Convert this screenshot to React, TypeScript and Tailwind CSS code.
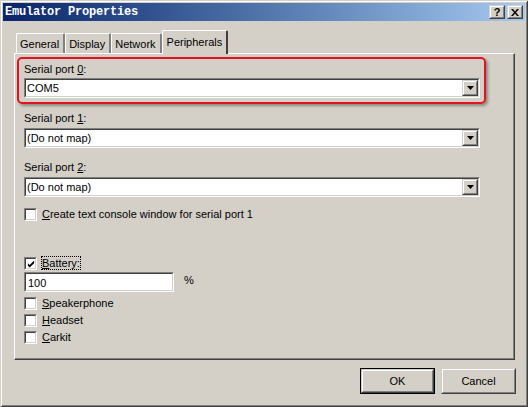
import type { ReactNode } from 'react';

const ui = "font-['Liberation_Sans',Arial,sans-serif] text-[11px] leading-[13px] text-black";

function Sunken({ className, children }: { className: string; children?: ReactNode }) {
  return (
    <div className={`border border-t-[#808080] border-l-[#808080] border-b-white border-r-white ${className}`}>
      <div className="flex h-full w-full border border-t-[#404040] border-l-[#404040] border-b-[#D4D0C8] border-r-[#D4D0C8] bg-white">
        {children}
      </div>
    </div>
  );
}

function Raised({ className, children }: { className: string; children?: ReactNode }) {
  return (
    <div className={`border border-t-[#D4D0C8] border-l-[#D4D0C8] border-b-[#404040] border-r-[#404040] ${className}`}>
      <div className="flex h-full w-full items-center justify-center border border-t-white border-l-white border-b-[#808080] border-r-[#808080] bg-[#D4D0C8]">
        {children}
      </div>
    </div>
  );
}

function Combo({ value }: { value: string }) {
  return (
    <Sunken className="h-[20px] w-[456px]">
      <span className="flex-1 pl-[1px] pt-[2px]">{value}</span>
      <Raised className="h-[16px] w-[16px]">
        <svg width="7" height="4" viewBox="0 0 7 4">
          <path d="M0 0h7L3.5 4z" fill="#000" />
        </svg>
      </Raised>
    </Sunken>
  );
}

function Check({ checked, children }: { checked?: boolean; children: ReactNode }) {
  return (
    <div className="flex items-center">
      <Sunken className="h-[13px] w-[13px]">
        {checked && (
          <svg width="9" height="9" viewBox="0 0 9 9" className="ml-[1px] mt-[1px]">
            <path d="M1 3v3l2 2 5-5V0L3 5z" fill="#000" />
          </svg>
        )}
      </Sunken>
      <span className="ml-[5px]">{children}</span>
    </div>
  );
}

function Tab({ label, active }: { label: string; active?: boolean }) {
  return (
    <div
      className={
        active
          ? 'relative z-10 mb-[-1px] flex h-[24px] items-center rounded-t-[2px] border-l border-t border-r-2 border-l-white border-t-white border-r-[#404040] bg-[#D4D0C8] px-[4px]'
          : 'flex h-[20px] items-center rounded-t-[2px] border-l border-t border-r-2 border-l-white border-t-white border-r-[#808080] pl-[3px] pr-[4px] pt-[1px]'
      }
    >
      {label}
    </div>
  );
}

export default function App() {
  return (
    <div className={`flex h-[407px] w-[528px] flex-col bg-[#D4D0C8] p-[3px] shadow-[inset_1px_1px_#D4D0C8,inset_-1px_-1px_#404040,inset_2px_2px_white,inset_-2px_-2px_#808080] ${ui}`}>
      {/* Title bar */}
      <div className="flex h-[18px] items-center bg-gradient-to-r from-[#0A246A] to-[#A6CAF0] pl-[2px] pr-[2px]">
        <span className="flex-1 font-['Liberation_Mono',monospace] text-[12px] font-bold tracking-[-0.2px] text-white">
          Emulator Properties
        </span>
        <Raised className="h-[14px] w-[16px]">
          <span className="font-['Liberation_Sans',sans-serif] text-[11px] font-bold leading-none">?</span>
        </Raised>
        <Raised className="ml-[2px] h-[14px] w-[16px]">
          <svg width="8" height="7" viewBox="0 0 8 7">
            <path d="M0 0h2l2 2.5L6 0h2L5 3.5 8 7H6L4 4.5 2 7H0l3-3.5z" fill="#000" />
          </svg>
        </Raised>
      </div>

      {/* Tabs */}
      <div className="ml-[11px] mt-[9px] flex items-end pl-[2px]">
        <Tab label="General" />
        <Tab label="Display" />
        <Tab label="Network" />
        <Tab label="Peripherals" active />
      </div>

      {/* Tab panel */}
      <div className="ml-[11px] flex h-[307px] w-[501px] flex-col border-l border-t border-l-white border-t-white border-r border-b border-r-[#404040] border-b-[#404040] pl-[9px] shadow-[inset_-1px_-1px_#808080]">
        <div className="-ml-[7px] mt-[3px] flex w-[469px] flex-col rounded-[5px] border-2 border-[#E0141E] pb-[4px] pl-[5px] pt-[4px] shadow-[2px_2px_3px_rgba(0,0,0,0.35)]">
          <span>
            Serial port <u>0</u>:
          </span>
          <div className="mt-[2px]">
            <Combo value="COM5" />
          </div>
        </div>

        <span className="mt-[8px]">
          Serial port <u>1</u>:
        </span>
        <div className="mt-[3px]">
          <Combo value="(Do not map)" />
        </div>

        <span className="mt-[13px]">
          Serial port <u>2</u>:
        </span>
        <div className="mt-[3px]">
          <Combo value="(Do not map)" />
        </div>

        <div className="mt-[11px]">
          <Check>
            <u>C</u>reate text console window for serial port 1
          </Check>
        </div>

        <div className="mt-[36px]">
          <Check checked>
            <span className="outline-1 outline-dotted outline-black">
              <u>B</u>attery:
            </span>
          </Check>
        </div>
        <div className="mt-[2px] flex items-center">
          <Sunken className="h-[20px] w-[150px]">
            <span className="pl-[2px] pt-[3px]">100</span>
          </Sunken>
          <span className="ml-[10px] -mt-[3px]">%</span>
        </div>
        <div className="mt-[5px] flex flex-col gap-[4px]">
          <Check>
            <u>S</u>peakerphone
          </Check>
          <Check>
            <u>H</u>eadset
          </Check>
          <Check>
            <u>C</u>arkit
          </Check>
        </div>
      </div>

      {/* Buttons */}
      <div className="mt-[8px] flex justify-end gap-[6px] pr-[9px]">
        <div className="border border-black">
          <Raised className="h-[24px] w-[73px]">OK</Raised>
        </div>
        <Raised className="h-[26px] w-[75px]">Cancel</Raised>
      </div>
    </div>
  );
}
